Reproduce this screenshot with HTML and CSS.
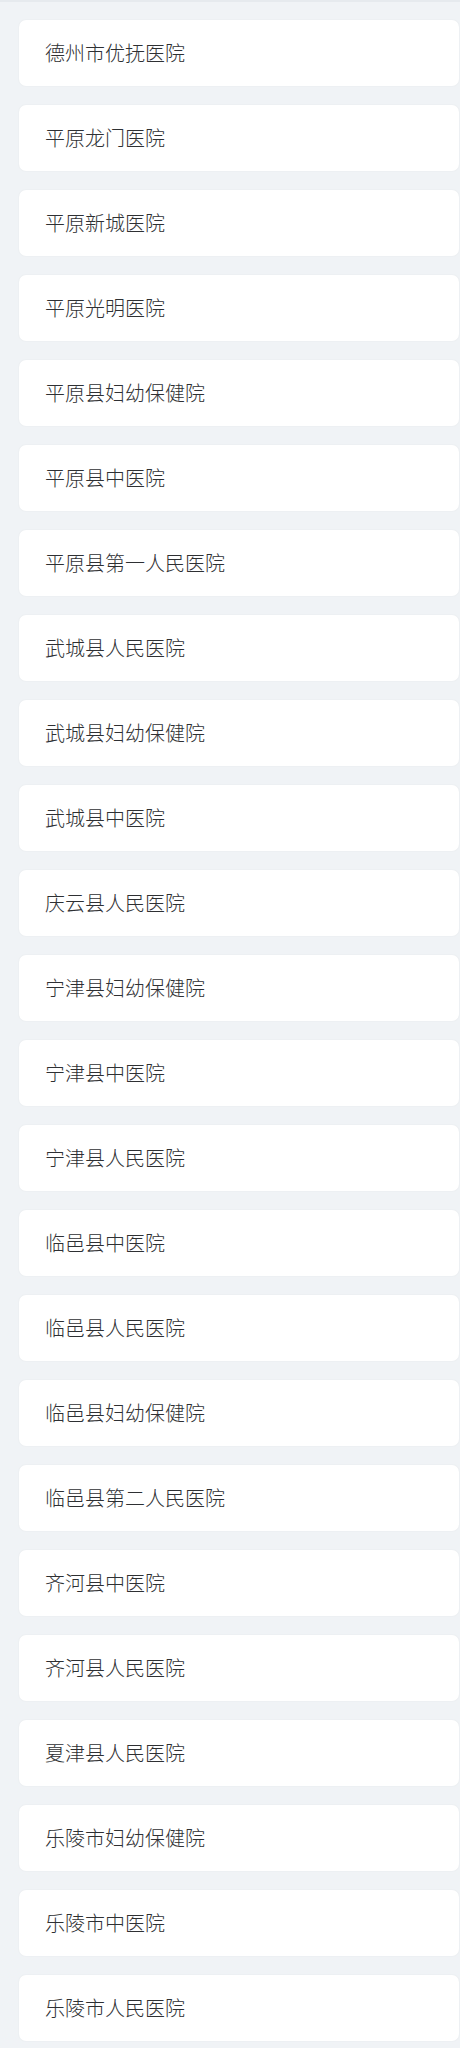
FILE: index.html
```html
<!DOCTYPE html>
<html lang="zh">
<head>
<meta charset="utf-8">
<link rel="stylesheet" href="styles.css">
</head>
<body>
<div class="topbar"></div>
<ul class="list">
<li class="card">德州市优抚医院</li>
<li class="card">平原龙门医院</li>
<li class="card">平原新城医院</li>
<li class="card">平原光明医院</li>
<li class="card">平原县妇幼保健院</li>
<li class="card">平原县中医院</li>
<li class="card">平原县第一人民医院</li>
<li class="card">武城县人民医院</li>
<li class="card">武城县妇幼保健院</li>
<li class="card">武城县中医院</li>
<li class="card">庆云县人民医院</li>
<li class="card">宁津县妇幼保健院</li>
<li class="card">宁津县中医院</li>
<li class="card">宁津县人民医院</li>
<li class="card">临邑县中医院</li>
<li class="card">临邑县人民医院</li>
<li class="card">临邑县妇幼保健院</li>
<li class="card">临邑县第二人民医院</li>
<li class="card">齐河县中医院</li>
<li class="card">齐河县人民医院</li>
<li class="card">夏津县人民医院</li>
<li class="card">乐陵市妇幼保健院</li>
<li class="card">乐陵市中医院</li>
<li class="card">乐陵市人民医院</li>
</ul>
</body>
</html>
```
FILE: styles.css
```css
html, body {
  margin: 0;
  padding: 0;
  background: #f0f3f6;
}
body {
  font-family: "Noto Sans CJK SC", "Noto Sans", sans-serif;
  color: #2e3033;
}
.topbar {
  height: 2px;
  background: #e6eaee;
}
.list {
  list-style: none;
  margin: 0;
  padding: 18px 1px 20px 19px;
  display: flex;
  flex-direction: column;
  gap: 19px;
}
.card {
  height: 66px;
  box-sizing: border-box;
  background: #fff;
  border-radius: 7px;
  box-shadow: 0 0 2px rgba(0, 0, 0, 0.06);
  display: flex;
  align-items: center;
  padding-left: 26px;
  font-size: 20px;
  font-weight: 300;
  line-height: 1;
}
```
